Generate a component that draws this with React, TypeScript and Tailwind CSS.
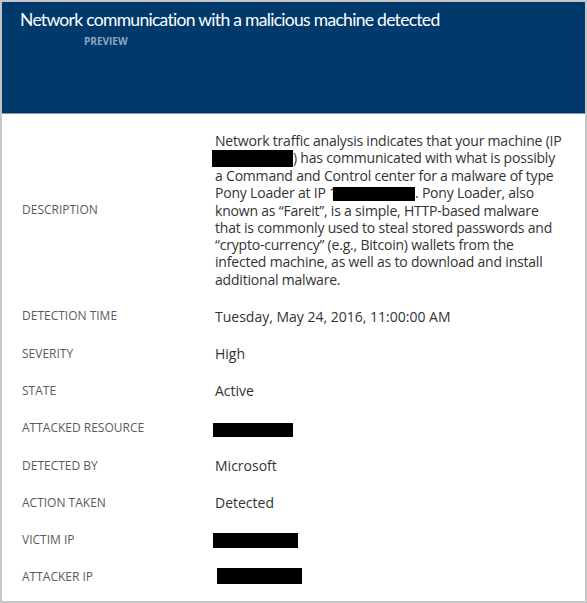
const FONT = { fontFamily: '"Open Sans", "Noto Sans", sans-serif' };

function Redact({ className = '' }: { className?: string }) {
  return <span className={`inline-block bg-black align-middle ${className}`} />;
}

type Row = { label: string; value: React.ReactNode };

const ROWS: Row[] = [
  { label: 'DETECTION TIME', value: 'Tuesday, May 24, 2016, 11:00:00 AM' },
  { label: 'SEVERITY', value: 'High' },
  { label: 'STATE', value: 'Active' },
  { label: 'ATTACKED RESOURCE', value: <Redact className="w-[80px] h-[14px] -ml-[2px] mt-[3px]" /> },
  { label: 'DETECTED BY', value: 'Microsoft' },
  { label: 'ACTION TAKEN', value: 'Detected' },
  { label: 'VICTIM IP', value: <Redact className="w-[85px] h-[15px] -ml-[2px] mt-[1px]" /> },
  { label: 'ATTACKER IP', value: <Redact className="w-[85px] h-[16px] ml-[2px] -mt-[2px]" /> },
];

export default function App() {
  return (
    <div className="w-[587px] h-[603px] bg-white border-2 border-[#c6c6c6] overflow-hidden" style={FONT}>
      <div className="h-[112px] bg-[#003a6c] border-b border-[#8797ab] pl-[18px] pt-[5px]">
        <h1
          className="text-white text-[17.5px] leading-[25px] tracking-[-0.7px]"
          style={{ fontFamily: 'Lato, "Open Sans", sans-serif' }}
        >
          Network communication with a malicious machine detected
        </h1>
        <div className="pl-[64px] mt-[3px] text-[10px] font-bold leading-[12px] text-[#8ea6c2]">PREVIEW</div>
      </div>

      <div className="pl-[20px]">
        <div className="flex items-center mt-[18px] mb-[10px]">
          <div className="w-[193px] text-[12px] text-[#5a5a5a]">DESCRIPTION</div>
          <div className="text-[14px] leading-[17.25px] tracking-[-0.2px] text-[#333]">
            <div>Network traffic analysis indicates that your machine (IP</div>
            <div>
              <Redact className="w-[81px] h-[17px] -ml-[3px] -mt-[2px]" />) has communicated with what is possibly
            </div>
            <div>a Command and Control center for a malware of type</div>
            <div>
              Pony Loader at IP 1<Redact className="w-[82px] h-[14px] -ml-[4px] -mt-[1px]" />. Pony Loader, also
            </div>
            <div>known as “Fareit”, is a simple, HTTP-based malware</div>
            <div>that is commonly used to steal stored passwords and</div>
            <div>“crypto-currency” (e.g., Bitcoin) wallets from the</div>
            <div>infected machine, as well as to download and install</div>
            <div>additional malware.</div>
          </div>
        </div>

        {ROWS.map(r => (
          <div key={r.label} className="flex items-center h-[37.3px]">
            <div className="w-[193px] text-[12px] text-[#5a5a5a]">{r.label}</div>
            <div className="text-[14px] text-[#333] flex items-center">{r.value}</div>
          </div>
        ))}
      </div>
    </div>
  );
}
